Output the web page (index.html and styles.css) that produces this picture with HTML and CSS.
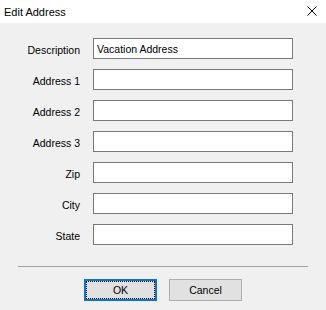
FILE: index.html
```html
<!DOCTYPE html>
<html lang="en">
<head>
    <meta charset="UTF-8">
    <title>Edit Address</title>
    <link rel="stylesheet" href="styles.css">
</head>
<body>
    <div class="window">
        <div class="titlebar">
            <span class="title">Edit Address</span>
            <svg class="close" width="10" height="10" viewBox="0 0 10 10">
                <path d="M0.5 0.5 L9.5 9.5 M9.5 0.5 L0.5 9.5" stroke="#000" stroke-width="1" fill="none"/>
            </svg>
        </div>
        <div class="content">
            <div class="form">
                <label>Description</label>
                <input type="text" value="Vacation Address">
                <label>Address 1</label>
                <input type="text">
                <label>Address 2</label>
                <input type="text">
                <label>Address 3</label>
                <input type="text">
                <label>Zip</label>
                <input type="text">
                <label>City</label>
                <input type="text">
                <label>State</label>
                <input type="text">
            </div>
            <div class="separator"></div>
            <div class="buttons">
                <button class="btn default"><span>OK</span></button>
                <button class="btn">Cancel</button>
            </div>
        </div>
    </div>
</body>
</html>
```

FILE: styles.css
```css
body {
    margin: 0;
    padding: 0;
    font-family: "Liberation Sans", Arial, sans-serif;
    font-size: 10.5px;
    color: #000;
}
.window {
    width: 326px;
    height: 310px;
    background-color: #f0f0f0;
}
.titlebar {
    height: 23px;
    background-color: #fff;
    display: flex;
    align-items: center;
    justify-content: space-between;
    padding: 0 9px 0 4px;
    box-sizing: border-box;
}
.title {
    font-size: 11px;
    line-height: 16px;
}
.close {
    display: block;
    margin-top: -1px;
}
.content {
    padding: 15px 0 0 0;
}
.form {
    display: grid;
    grid-template-columns: 80px 200px;
    column-gap: 13px;
    row-gap: 10px;
    align-items: center;
}
.form label {
    text-align: right;
    line-height: 16px;
    padding-top: 2px;
}
.form input {
    height: 21px;
    box-sizing: border-box;
    border: 1px solid #7a7a7a;
    background-color: #fff;
    padding: 0 3px;
    margin: 0;
    font-family: inherit;
    font-size: 10.5px;
    color: #000;
    outline: none;
}
.separator {
    margin: 21px 18px 0 18px;
    height: 1px;
    background-color: #a0a0a0;
}
.buttons {
    display: flex;
    gap: 12px;
    padding: 12px 0 0 84px;
}
.btn {
    width: 73px;
    height: 22px;
    box-sizing: border-box;
    margin: 0;
    padding: 0;
    border: 1px solid #adadad;
    background-color: #e1e1e1;
    font-family: inherit;
    font-size: 10.5px;
    color: #000;
}
.btn.default {
    border: 2px solid #0078d7;
    padding: 0;
}
.btn.default span {
    display: flex;
    align-items: center;
    justify-content: center;
    height: 100%;
    border: 1px dotted #000;
    box-sizing: border-box;
}
```
